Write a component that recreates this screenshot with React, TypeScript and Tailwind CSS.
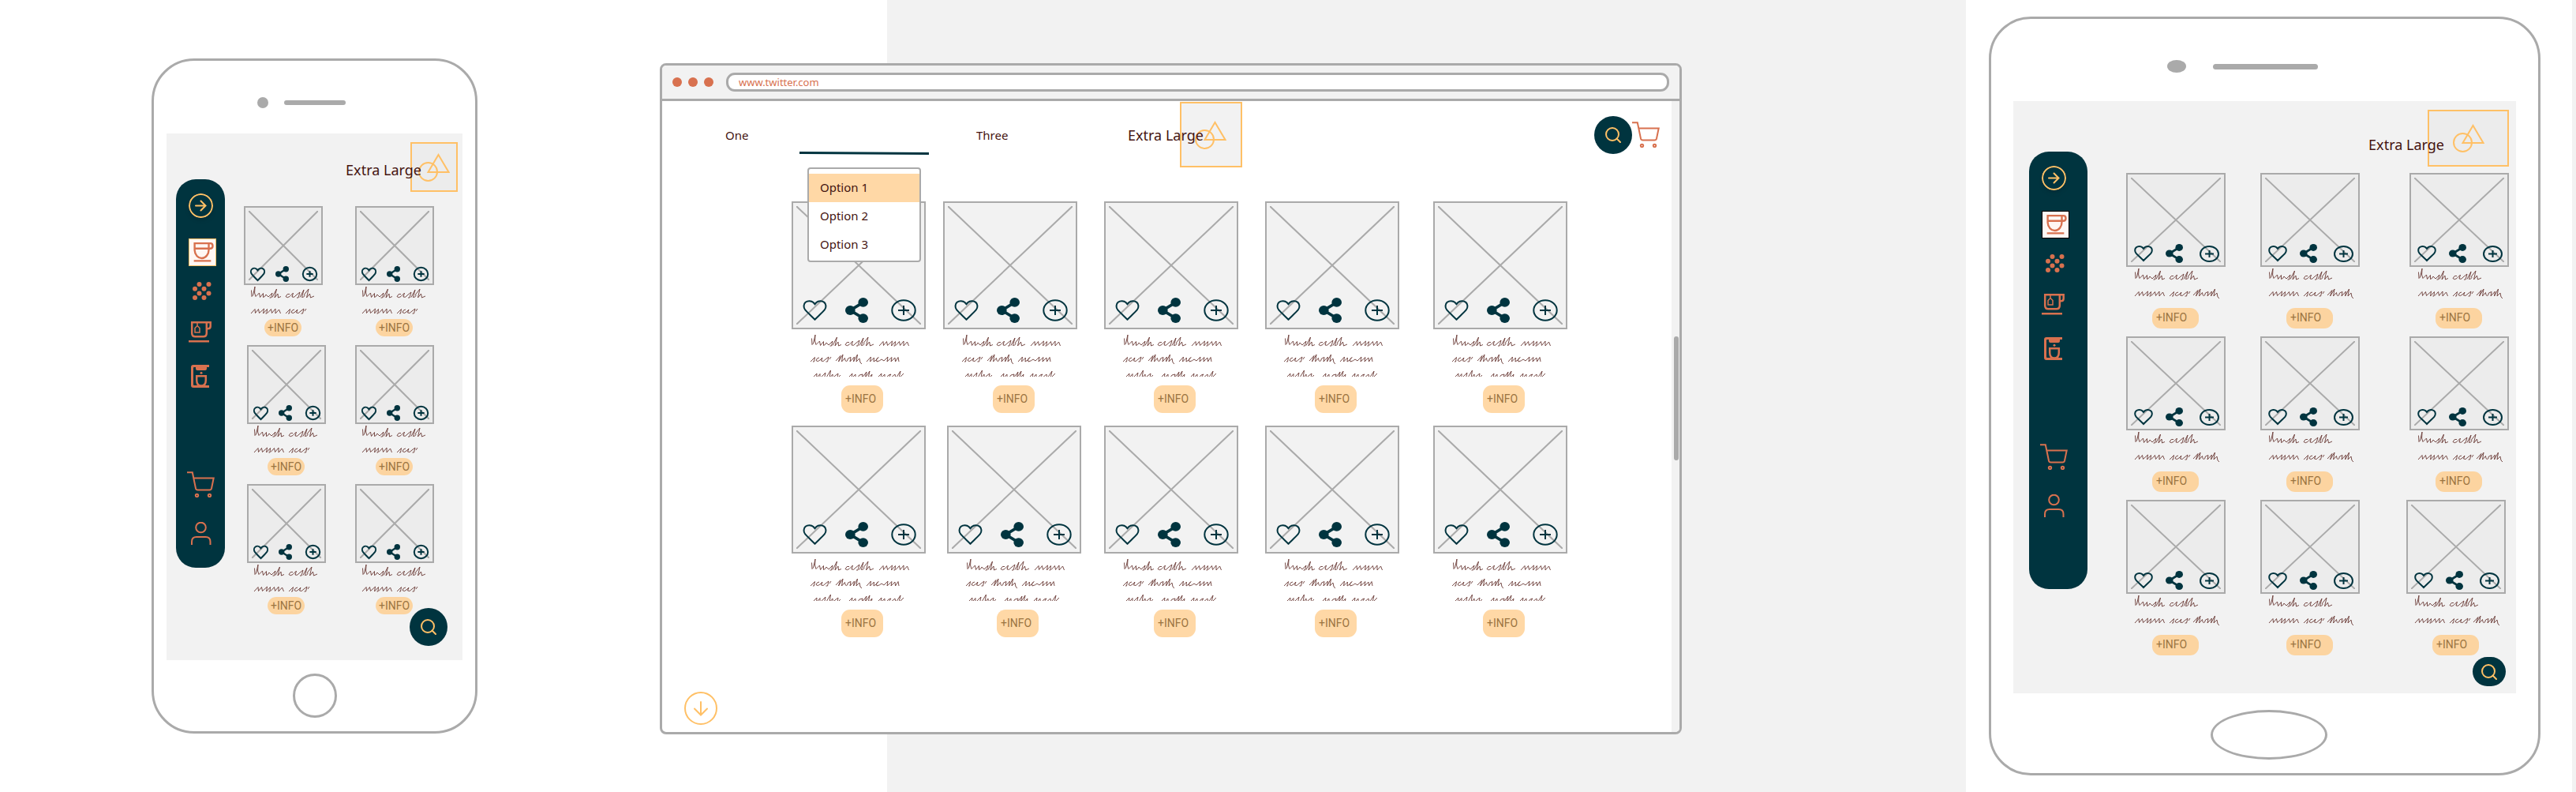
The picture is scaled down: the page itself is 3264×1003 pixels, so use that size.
import type { ReactNode } from 'react';

type Variant = 'phone' | 'browser' | 'tablet';

/* Handwritten filler words, one polyline each, sitting on y = 0. */
const WORDS = {
  a: 'M.5 -9.5L1 -1.5L2.5 -3L5 -14L4.6 -6L6 -1.5L10.500 -6L11.500 -.5L15.500 -5.500L15.500 -.5Q18 -1 19 -4L22 -1L27 -6L25.500 0L23.500 0M27 -.5L32.500 -11L30 0L34 -5L34.500 0L38 -1.500',
  b: 'M5 -4.500Q2 -6 0 -1.500Q2 1 5 -1.500L9.500 -6L8 -1Q11 .5 13 -3L18 -7L16 0L14 0M18 -.5L23 -10L20.500 -.5Q25 -1 23.500 -4L29 -11L26.500 0L30.500 -5L31.500 0L36 -2',
  c: 'M0 0L5 -5.500L5.500 -.5L9.500 -5.500L10.500 -.5L16.500 -6L15.500 0L20.500 -5.500L20 0L18.500 0M21 -.5L25.500 -5.500L26.500 -.5L31 -6L31 0L35.500 -5L37.500 0',
  d: 'M0 0L5.500 -5.500L4.500 0L3 0M11 -5Q8 -5 7 -1.500Q9 1 12 -2L15 -5L13.500 -1Q16 1 19 -3L23 -6L21.500 0L19.500 0M24 -3L26 -6',
  e: 'M0 -1L6 -7.500L3.500 0L9 -9L7.500 0L11.500 -4.500Q12 1 14.500 -1L15.500 -4L19 -5.500L18 0L23.500 -6L22.500 0L27.500 -9L26 0L30 -4L31 1L33 3',
  f: 'M0 0L5.500 -6L4.500 0L9.500 -5L9 0Q12 -1 15 -5.500Q11 -3 13 0Q17 -1 19 -3L22 -1L27 -6L26 0L32 -5.500L31 0L36 -5L36.500 0L40 -5.500L41 0',
  g: 'M0 0L6 -6L5.500 0L10 -5.500L10 0L17 -7L15.500 0L18 -1L23.500 -10L22 0L26 -5Q26 1 29 -3L33 -6L32 0L36 -4',
  h: 'M0 0L6 -6L5 0L10 -5L10 0Q14 -1 15 -4L19 -5L18 0L24 -8L22 0L28 -9L26 0L31 -5L30 0M37 0L43 -6L42 0L47 -5L47 0Q50 -1 52 -4L55 -5Q52 -3 54 0L60 -5L61 0L67 -9L65 0L71 -6',
};

const SCRIBBLES: Record<Variant, { cls: string; words: [keyof typeof WORDS, number, number][] }> = {
  phone: {
    cls: 'ml-2 h-[43px] w-[90px]',
    words: [['a', 1, 16], ['b', 45, 16], ['c', 1, 36], ['d', 45, 36]],
  },
  browser: {
    cls: 'ml-6 h-[60px] w-[130px]',
    words: [
      ['a', 1, 21], ['b', 44, 21], ['c', 87, 21],
      ['d', 0, 41], ['e', 32, 41], ['f', 71, 41],
      ['g', 2, 62], ['h', 47, 62],
    ],
  },
  tablet: {
    cls: 'ml-[10px] h-[52px] w-[112px]',
    words: [['a', 1, 16], ['b', 45, 16], ['c', 1, 37], ['d', 45, 37], ['e', 75, 37]],
  },
};

function Scribble({ variant }: { variant: Variant }) {
  const { cls, words } = SCRIBBLES[variant];
  return (
    <svg className={`block ${cls}`} fill="none" stroke="#6a3a36" strokeWidth="0.9" strokeLinejoin="round" aria-hidden="true">
      {words.map(([w, x, y]) => (
        <path key={`${w}${y}`} d={WORDS[w]} transform={`translate(${x} ${y})`} />
      ))}
    </svg>
  );
}

function HeartIcon({ className }: { className: string }) {
  return (
    <svg viewBox="0 0 24 20" preserveAspectRatio="none" className={`block overflow-visible ${className}`} fill="none" stroke="#00343f" strokeWidth="2" aria-hidden="true">
      <path vectorEffect="non-scaling-stroke" d="M12 19C9 16 4.500 12 2.500 9.600C.6 7.200 .8 3.900 2.800 2.200C5 .4 8.500 .5 10.500 2.300L12 4L13.500 2.300C15.500 .5 19 .4 21.200 2.200C23.200 3.900 23.400 7.200 21.500 9.600C19.500 12 15 16 12 19Z" />
    </svg>
  );
}

function ShareIcon({ className }: { className: string }) {
  return (
    <svg viewBox="0 0 17 20" preserveAspectRatio="none" className={`block ${className}`} fill="#00343f" aria-hidden="true">
      <path d="M13.300 3.700L3.700 10L13.300 16.300" fill="none" stroke="#00343f" strokeWidth="2.300" />
      <circle cx="13.300" cy="3.700" r="3.700" />
      <circle cx="3.700" cy="10" r="3.700" />
      <circle cx="13.300" cy="16.300" r="3.700" />
    </svg>
  );
}

function PlusIcon({ className }: { className: string }) {
  return (
    <svg viewBox="0 0 32 28" preserveAspectRatio="none" className={`block overflow-visible ${className}`} fill="none" stroke="#00343f" strokeWidth="2" aria-hidden="true">
      <ellipse vectorEffect="non-scaling-stroke" cx="16" cy="14" rx="14.700" ry="12.700" />
      <path vectorEffect="non-scaling-stroke" d="M9 14H23M16 8V20" />
    </svg>
  );
}

function SearchIcon() {
  return (
    <svg viewBox="0 0 20 20" className="block h-5 w-5" fill="none" stroke="#ffc066" strokeWidth="2" strokeLinecap="round" aria-hidden="true">
      <circle cx="9" cy="9" r="8" />
      <path d="M14.500 14.500L19 19" />
    </svg>
  );
}

function CartIcon() {
  return (
    <svg viewBox="0 0 35 33" className="block h-[33px] w-[35px]" fill="none" stroke="#d8714f" strokeWidth="2" aria-hidden="true">
      <path d="M0 1.200H6.800L11 21.500Q11.500 23.500 13.500 23.500H28.500Q30.500 23.500 31 21.500L33.700 8.500H8.500" />
      <circle cx="12.500" cy="30.500" r="1.700" />
      <circle cx="28.500" cy="30.500" r="1.700" />
    </svg>
  );
}

const CARD = {
  phone: {
    width: 'w-[100px]', image: 'h-[100px] bg-[#ececec]',
    actions: 'grid-cols-[32px_34px_19px] pl-[6px] pb-[2px]',
    heart: 'h-[17px] w-[19px]', share: 'h-5 w-[17px]', plus: 'h-[18px] w-[19px]',
    pill: 'ml-[26px] h-[22px] w-[47px] justify-center rounded-full bg-[#fcd4a0]',
  },
  browser: {
    width: 'w-[170px]', image: 'h-[162px] bg-[#f2f2f2]',
    actions: 'grid-cols-[54px_58px_32px] pl-3 pb-[6px]',
    heart: 'h-[26px] w-[31px]', share: 'h-8 w-[29px]', plus: 'h-7 w-8',
    pill: 'mt-[11px] ml-[63px] h-[35px] w-[53px] pl-[5px] pb-0.5 rounded-[11px] bg-[#ffd8a6]',
  },
  tablet: {
    width: 'w-[126px]', image: 'h-[119px] bg-[#ececec]',
    actions: 'grid-cols-[40px_43px_25px] pl-2 pb-[3px]',
    heart: 'h-5 w-6', share: 'h-6 w-[22px]', plus: 'h-[21px] w-[25px]',
    pill: 'ml-[33px] h-[26px] w-[59px] pl-[5px] pb-0.5 rounded-[11px] bg-[#fcd4a0]',
  },
};

function ProductCard({ variant }: { variant: Variant }) {
  const s = CARD[variant];
  return (
    <article className={s.width}>
      <div className={`relative border-2 border-[#aaaaaa] ${s.image}`}>
        <svg className="block h-full w-full p-1" preserveAspectRatio="none" viewBox="0 0 100 100" stroke="#aaaaaa" strokeWidth="2" strokeLinecap="round" aria-hidden="true">
          <path vectorEffect="non-scaling-stroke" d="M0 0L100 100M100 0L0 100" />
        </svg>
        <div className={`absolute inset-x-0 bottom-0 grid items-center ${s.actions}`}>
          <button type="button" aria-label="Like"><HeartIcon className={s.heart} /></button>
          <button type="button" aria-label="Share"><ShareIcon className={s.share} /></button>
          <button type="button" aria-label="Add"><PlusIcon className={s.plus} /></button>
        </div>
      </div>
      <Scribble variant={variant} />
      <button type="button" className={`flex items-center font-[family-name:Roboto,sans-serif] text-sm leading-5 text-[#9b7441] ${s.pill}`}>
        +INFO
      </button>
    </article>
  );
}

function CardRow({ variant, count, className }: { variant: Variant; count: number; className: string }) {
  return (
    <div className={`grid ${className}`}>
      {Array.from({ length: count }, (_, i) => <ProductCard key={i} variant={variant} />)}
    </div>
  );
}

function Brand({ title, logo }: { title: string; logo: string }) {
  return (
    <div className="flex">
      <h2 className={`z-10 text-lg leading-6 whitespace-nowrap text-[#451410] ${title}`}>Extra Large</h2>
      <div className={`flex items-center justify-center border-2 border-[#ffc066] ${logo}`}>
        <svg viewBox="0 0 40 36" className="block h-9 w-10" fill="none" stroke="#ffc066" strokeWidth="2" role="img" aria-label="Logo">
          <circle cx="12.500" cy="23.500" r="11.500" />
          <path d="M25.500 2L38.500 24H12.500Z" />
        </svg>
      </div>
    </div>
  );
}

const RUST = '#d8714f';

function SidebarItem({ label, className, children }: { label: string; className: string; children: ReactNode }) {
  return (
    <li className={className}>
      <button type="button" aria-label={label} className="block">{children}</button>
    </li>
  );
}

function Sidebar({ className, frame }: { className: string; frame: string }) {
  return (
    <nav aria-label="Sections" className={`shrink-0 self-start rounded-[25px] bg-[#00343f] ${className}`}>
      <ul className="pl-4">
        <SidebarItem label="Expand" className="pt-[18px]">
          <svg viewBox="0 0 31 31" className="block h-[31px] w-[31px] rounded-full shadow-md" fill="none" stroke="#ffc066" strokeWidth="2" aria-hidden="true">
            <circle cx="15.500" cy="15.500" r="14.500" />
            <path d="M9 15.500H21.500M15.500 9.500L21.500 15.500L15.500 21.500" strokeLinecap="round" />
          </svg>
        </SidebarItem>
        <SidebarItem label="Coffee" className="pt-[26px]">
          <svg viewBox="0 0 35 35" className={`block h-[35px] w-[35px] border bg-[#fff7f4] ${frame}`} aria-hidden="true">
            <g fill="none" stroke={RUST} strokeWidth="2.500">
              <path d="M7 5.500H26V13.500A9.500 11.500 0 0 1 7 14.500ZM7 12.500H26M26 5.500H28Q31.300 5.500 31.300 9Q31.300 12.500 28 12.500H26M6 29H29" />
            </g>
          </svg>
        </SidebarItem>
        <SidebarItem label="Beans" className="pt-5">
          <svg viewBox="0 0 35 23" className="block h-[23px] w-[35px]" fill={RUST} aria-hidden="true">
            <circle cx="13.500" cy="3" r="3" /><circle cx="25.500" cy="3" r="3" />
            <circle cx="8" cy="8.700" r="3" /><circle cx="19.500" cy="8.700" r="3" />
            <circle cx="13.500" cy="14.500" r="3" /><circle cx="25.500" cy="14.500" r="3" />
            <circle cx="8" cy="20" r="3" /><circle cx="19.500" cy="20" r="3" />
          </svg>
        </SidebarItem>
        <SidebarItem label="Tea" className="pt-[27px]">
          <svg viewBox="0 0 35 27" className="block h-[27px] w-[35px]" fill="none" stroke={RUST} strokeWidth="2.500" aria-hidden="true">
            <path d="M4.200 1.200H22.800V15Q22.800 19.300 18.500 19.300H8.500Q4.200 19.300 4.200 15ZM22.800 1.200H27.700V6Q27.700 9.300 24.500 9.300H22.800M0 25.200H26" />
            <path d="M11 1.500V5.500M11 5.500L14 8.500V14H8V8.500Z" strokeWidth="1.500" />
          </svg>
        </SidebarItem>
        <SidebarItem label="Espresso machine" className="pt-7">
          <svg viewBox="0 0 35 29" className="block h-[29px] w-[35px]" fill={RUST} aria-hidden="true">
            <path d="M6 0H26V3H23V5Q23 7 21 7H11Q9 7 9 5V3H7Q6 3 6 4V25Q6 26 7 26H26V29H6Q3 29 3 26V3Q3 0 6 0Z" />
            <circle cx="16" cy="10.300" r="1.500" />
            <path d="M10.200 14.200H21.800V19.500Q21.800 26.500 16 26.500Q10.200 26.500 10.200 19.500Z" fill="none" stroke={RUST} strokeWidth="2.500" />
          </svg>
        </SidebarItem>
        <SidebarItem label="Cart" className="-ml-0.5 pt-[106px]">
          <CartIcon />
        </SidebarItem>
        <SidebarItem label="Profile" className="pt-[31px]">
          <svg viewBox="0 0 35 29" className="block h-[29px] w-[35px]" fill="none" stroke={RUST} strokeWidth="2" aria-hidden="true">
            <circle cx="15.500" cy="7" r="6.300" />
            <path d="M4 29V25Q4 19 10 19H21.500Q27.500 19 27.500 25V29" />
          </svg>
        </SidebarItem>
      </ul>
    </nav>
  );
}

function Phone() {
  return (
    <section aria-label="Phone" className="mt-[74px] rounded-[54px] border-[3px] border-[#aaaaaa] bg-white px-4 pb-[17px]">
      <div className="flex h-[92px] items-center gap-5 pt-[14px] pl-[115px]">
        <span className="h-[14px] w-[14px] rounded-full bg-[#aaaaaa]" />
        <span className="h-[6px] w-[78px] rounded-full bg-[#aaaaaa]" />
      </div>
      <div className="relative flex bg-[#f2f2f2] pb-[58px]">
        <Sidebar className="mt-[58px] ml-3 h-[492px] w-[62px]" frame="border-[#ffc066]" />
        <div className="flex-1">
          <header className="flex justify-end pt-[11px] pr-[6px]">
            <Brand title="-mr-[14px] self-end pb-4" logo="h-[63px] w-[60px] bg-[#ececec]" />
          </header>
          <div className="mt-[18px] flex flex-col gap-[11px]">
            <CardRow variant="phone" count={2} className="grid-cols-[141fr_100fr] pr-9 pl-6" />
            <CardRow variant="phone" count={2} className="grid-cols-[137fr_100fr] pr-9 pl-7" />
            <CardRow variant="phone" count={2} className="grid-cols-[137fr_100fr] pr-9 pl-7" />
          </div>
        </div>
        <button type="button" aria-label="Search" className="absolute right-[19px] bottom-[18px] flex h-12 w-12 items-center justify-center rounded-full bg-[#00343f]">
          <SearchIcon />
        </button>
      </div>
      <button type="button" aria-label="Home" className="mx-auto mt-[17px] block h-14 w-14 rounded-full border-[3px] border-[#aaaaaa]" />
    </section>
  );
}

function Tablet() {
  return (
    <section aria-label="Tablet" className="mt-[21px] rounded-[53px] border-[3px] border-[#aaaaaa] bg-white px-7 pb-[17px]">
      <div className="flex h-[104px] items-center gap-[34px] pt-4 pl-[195px]">
        <span className="h-4 w-6 rounded-[50%] bg-[#aaaaaa]" />
        <span className="h-[7px] w-[133px] rounded-full bg-[#aaaaaa]" />
      </div>
      <div className="relative flex bg-[#f2f2f2] pb-12">
        <Sidebar className="mt-16 ml-5 h-[554px] w-[74px]" frame="border-black" />
        <div className="flex-1">
          <header className="flex justify-end pt-[11px] pr-[9px]">
            <Brand title="-mr-[21px] self-end pb-4" logo="h-[72px] w-[103px] bg-[#ececec]" />
          </header>
          <div className="mt-2 flex flex-col gap-[10px]">
            <CardRow variant="tablet" count={3} className="grid-cols-[170fr_189fr_126fr] pr-[9px] pl-[49px]" />
            <CardRow variant="tablet" count={3} className="grid-cols-[170fr_189fr_126fr] pr-[9px] pl-[49px]" />
            <CardRow variant="tablet" count={3} className="grid-cols-[170fr_185fr_126fr] pr-[13px] pl-[49px]" />
          </div>
        </div>
        <button type="button" aria-label="Search" className="absolute right-[13px] bottom-[9px] flex h-[37px] w-[42px] items-center justify-center rounded-[19px] bg-[#00343f]">
          <SearchIcon />
        </button>
      </div>
      <button type="button" aria-label="Home" className="mt-[21px] ml-[250px] block h-[63px] w-[148px] rounded-[50%] border-[3px] border-[#aaaaaa]" />
    </section>
  );
}

function BrowserNav() {
  return (
    <nav aria-label="Main" className="grid h-[84px] grid-cols-[94fr_224fr_192fr_591fr_83fr] items-center pt-px pr-[15px] pl-20 text-[15px] leading-6 text-[#451410]">
      <a href="#one">One</a>
      <div className="relative self-stretch">
        <a href="#two" aria-label="Two" aria-expanded="true" className="flex h-[67px] w-[164px] items-end">
          <svg className="block h-1 w-full" viewBox="0 0 164 4" preserveAspectRatio="none" aria-hidden="true">
            <path d="M0 1.500L164 2.500" stroke="#00343f" strokeWidth="3" />
          </svg>
        </a>
        <ul role="menu" className="absolute top-[83px] left-[10px] z-20 w-36 rounded-[4px] border-2 border-[#aaaaaa] bg-white pt-[6px] pb-0.5">
          {['Option 1', 'Option 2', 'Option 3'].map((option, i) => (
            <li key={option} role="none">
              <button type="button" role="menuitem" className={`block h-9 w-full pb-0.5 pl-[14px] text-left ${i === 0 ? 'bg-[#ffd8a6]' : ''}`}>
                {option}
              </button>
            </li>
          ))}
        </ul>
      </div>
      <a href="#three">Three</a>
      <Brand title="-mr-[30px] self-center" logo="h-[83px] w-[79px] bg-[#f2f2f2]" />
      <div className="flex items-center">
        <button type="button" aria-label="Search" className="flex h-12 w-12 shrink-0 items-center justify-center rounded-full bg-[#00343f]">
          <SearchIcon />
        </button>
        <button type="button" aria-label="Cart" className="shrink-0"><CartIcon /></button>
      </div>
    </nav>
  );
}

function Browser() {
  return (
    <section aria-label="Browser" className="mt-20 overflow-hidden rounded-lg border-[3px] border-[#aaaaaa] bg-white">
      <header className="flex h-[45px] items-center border-b-[3px] border-[#aaaaaa] bg-[#f2f2f2] pr-[13px] pl-[13px]">
        <div className="flex gap-2">
          <span className="h-3 w-3 rounded-full bg-[#d8714f]" />
          <span className="h-3 w-3 rounded-full bg-[#d8714f]" />
          <span className="h-3 w-3 rounded-full bg-[#d8714f]" />
        </div>
        <input type="text" aria-label="Address" defaultValue="www.twitter.com" className="ml-4 h-6 min-w-0 flex-1 rounded-[11px] border-[3px] border-[#aaaaaa] bg-white px-[13px] text-[13px] text-[#d8714f] outline-none" />
      </header>
      <div className="flex">
        <div className="flex-1 pb-[9px]">
          <BrowserNav />
          <div className="mt-[43px] flex flex-col gap-4 pr-[132px] pl-[164px]">
            <CardRow variant="browser" count={5} className="grid-cols-[192fr_204fr_204fr_213fr_170fr]" />
            <CardRow variant="browser" count={5} className="grid-cols-[197fr_199fr_204fr_213fr_170fr]" />
          </div>
          <button type="button" aria-label="Scroll down" className="mt-[69px] ml-7 block">
            <svg viewBox="0 0 42 42" className="block h-[42px] w-[42px]" fill="none" stroke="#ffc066" strokeWidth="2" aria-hidden="true">
              <circle cx="21" cy="21" r="20" />
              <path d="M21 13V29.500M13 21.500L21 29.500L29 21.500" strokeLinecap="round" />
            </svg>
          </button>
        </div>
        <div className="w-[10px] shrink-0 bg-[#f2f2f2] pt-[298px] pl-[3px]">
          <div className="h-[157px] w-[6px] rounded-full bg-[#aaaaaa]" />
        </div>
      </div>
    </section>
  );
}

export default function App() {
  return (
    <main className="grid min-h-screen grid-cols-[192fr_413fr_231fr_1295fr_389fr_699fr_45fr] items-start bg-[linear-gradient(to_right,#ffffff_34.44%,#f2f2f2_34.44%,#f2f2f2_76.32%,#ffffff_76.32%,#ffffff_99.85%,#f2f2f2_99.85%)] font-[family-name:'Noto_Sans',sans-serif]">
      <div className="col-start-2"><Phone /></div>
      <div className="col-start-4"><Browser /></div>
      <div className="col-start-6"><Tablet /></div>
    </main>
  );
}
